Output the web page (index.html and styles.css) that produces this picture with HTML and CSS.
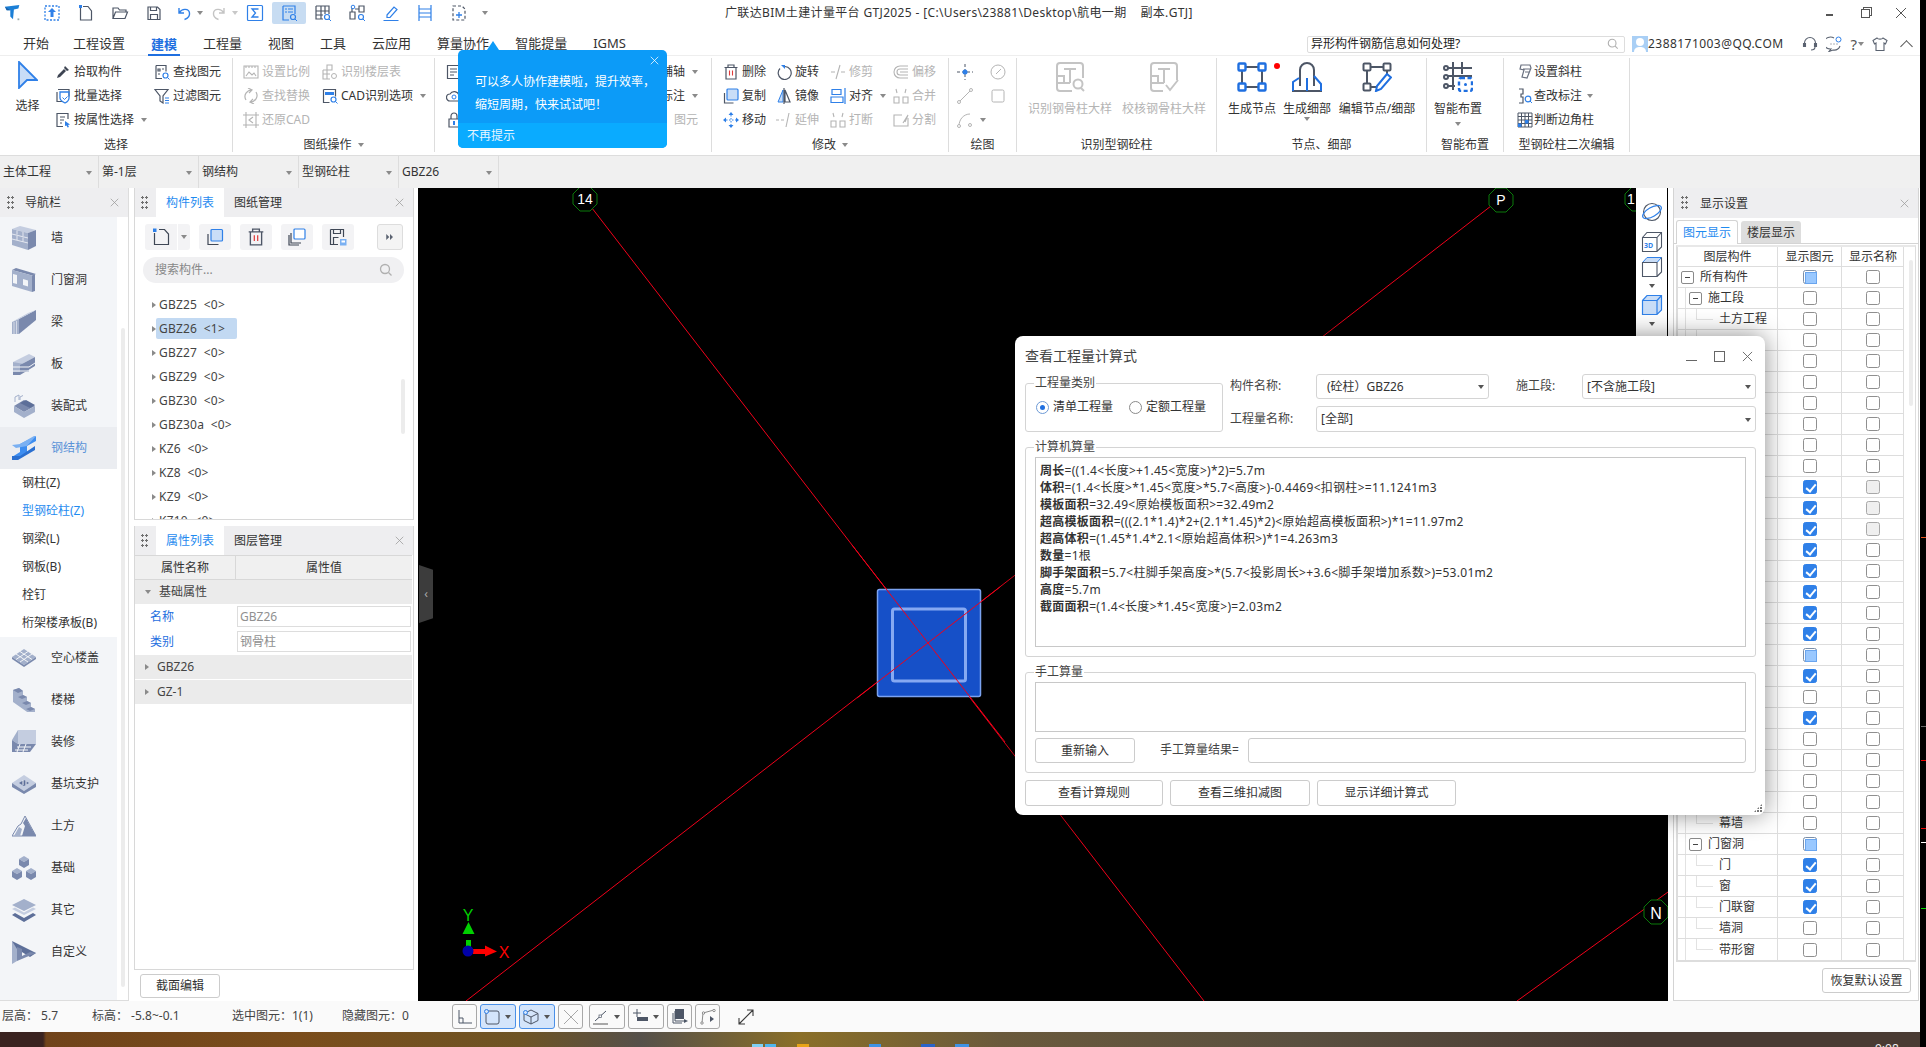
FILE: index.html
```html
<!DOCTYPE html>
<html lang="zh-CN">
<head>
<meta charset="utf-8">
<title>广联达BIM土建计量平台 GTJ2025</title>
<link rel="stylesheet" href="styles.css">
</head>
<body>
<svg class="sprite" xmlns="http://www.w3.org/2000/svg">
  <defs>
    <symbol id="logo" viewBox="0 0 20 20"><path fill="#1b7fd6" d="M1 3 L17 1 L16 5 L11 6 L10 17 L7 14 L7 7 L3 7z"/><path fill="#1b5fa6" d="M1 3 L7 7 L3 7z"/><path fill="#9aa" d="M15 16h2v2h-2z"/></symbol>
    <symbol id="q-up" viewBox="0 0 18 18"><rect x="2" y="2" width="14" height="14" fill="none" stroke="#2f80e8" stroke-dasharray="2 1.5" stroke-width="1.3"/><path fill="#2f80e8" d="M9 4l4 4h-2.500v5h-3V8H5z"/></symbol>
    <symbol id="q-new" viewBox="0 0 18 18"><path fill="none" stroke="#4d5666" stroke-width="1.2" d="M3.500 3.500V16h11V7L11 2.500H6"/><path fill="#2f80e8" d="M2 1h3v3H2z"/></symbol>
    <symbol id="q-open" viewBox="0 0 18 18"><path fill="none" stroke="#4d5666" stroke-width="1.2" d="M2 14.500V4h5l1.500 2H15v2M2 14.500l2.500-6.500H16.500L14 14.500z"/></symbol>
    <symbol id="q-save" viewBox="0 0 18 18"><path fill="none" stroke="#4d5666" stroke-width="1.2" d="M3 3h9.500L15 5.500V15.500H3zM5.500 3v3.500h6V3M5.500 15.500V10.500h7v5"/></symbol>
    <symbol id="q-undo" viewBox="0 0 18 18"><path fill="none" stroke="#2f80e8" stroke-width="1.4" d="M4 4v5h5M4.500 8.500C7 4 14 4.500 14.500 9c.4 3.500-2 5.500-5 6.500"/></symbol>
    <symbol id="q-redo" viewBox="0 0 18 18"><path fill="none" stroke="#c4c4c4" stroke-width="1.4" d="M14 4v5H9M13.500 8.500C11 4 4 4.500 3.500 9c-.4 3.500 2 5.500 5 6.500"/></symbol>
    <symbol id="q-sum" viewBox="0 0 18 18"><rect x="1.500" y="1.500" width="15" height="15" rx="1" fill="none" stroke="#2f80e8" stroke-width="1.2"/><path fill="none" stroke="#2f80e8" stroke-width="1.300" d="M12.500 5H6l3.500 4L6 13h6.500"/></symbol>
    <symbol id="q-list" viewBox="0 0 18 18"><path fill="none" stroke="#2f80e8" stroke-width="1.2" d="M3 2h12v8M3 2v14h6M5 5h2M8 5h5M5 8h2M8 8h5"/><circle cx="13" cy="13" r="2.500" fill="none" stroke="#2f80e8" stroke-width="1.2"/><path stroke="#2f80e8" d="M15 15l2 2"/></symbol>
    <symbol id="q-grid" viewBox="0 0 18 18"><path fill="none" stroke="#4d5666" stroke-width="1.2" d="M2 2h13v8M2 2v13h7M2 7h13M2 11h7M7 2v13M11 2v8"/><circle cx="13" cy="13" r="2.500" fill="none" stroke="#2f80e8" stroke-width="1.2"/><path stroke="#2f80e8" d="M15 15l2 2"/></symbol>
    <symbol id="q-comp" viewBox="0 0 18 18"><path fill="none" stroke="#4d5666" stroke-width="1.2" d="M2 8h5v7H2zM11 2h5v6h-5zM7 5h4M4 4v4"/><circle cx="13" cy="13" r="2.500" fill="none" stroke="#2f80e8" stroke-width="1.2"/><path stroke="#2f80e8" d="M15 15l2 2"/><circle cx="5" cy="3" r="1.800" fill="none" stroke="#2f80e8"/></symbol>
    <symbol id="q-edit" viewBox="0 0 18 18"><path fill="none" stroke="#2f80e8" stroke-width="1.2" d="M5 11l7-8 3 2.500-7 8H5zM1.500 16.500h15"/></symbol>
    <symbol id="q-frame" viewBox="0 0 18 18"><path fill="none" stroke="#2f80e8" stroke-width="1.2" d="M3 1v16M15 1v16M3 5h12M3 9h12M3 13h12"/></symbol>
    <symbol id="q-plus" viewBox="0 0 18 18"><path fill="none" stroke="#4d5666" stroke-width="1.2" stroke-dasharray="3 2" d="M3 2h9l3 3v11H3z"/><path stroke="#2f80e8" stroke-width="1.300" d="M6 11h6M9 8v6"/></symbol>
    <symbol id="r-arrow" viewBox="0 0 20 28"><path d="M1 1 L19 19 L9 19 L1 27z" fill="#c9ddf7" stroke="#2f80e8" stroke-width="1.800"/></symbol>
    <symbol id="r-pick" viewBox="0 0 16 16"><path fill="#3d4452" d="M10 2l4 4-2 1-3-3zM9 5l2 2-6 6-3 1 1-3z"/></symbol>
    <symbol id="r-batch" viewBox="0 0 16 16"><path fill="none" stroke="#4d5666" stroke-width="1.200" d="M3 1.500h11v7M2 4v9.500h6"/><path fill="none" stroke="#2f80e8" stroke-width="1.300" d="M5 4h9v6c0 2-2 4-4 5-2-1-5-3-5-5z"/><path fill="none" stroke="#2f80e8" d="M7.500 9.500l2 2 3-3"/></symbol>
    <symbol id="r-attr" viewBox="0 0 16 16"><path fill="none" stroke="#4d5666" stroke-width="1.200" d="M13 7V1.500H2v13h6M5 5h5M5 8h4M5 11h2"/><path fill="#2f80e8" d="M10 9l5 3.500-2 .5 1 2-1.500.5-1-2L10 14z"/></symbol>
    <symbol id="r-find" viewBox="0 0 16 16"><path fill="none" stroke="#4d5666" stroke-width="1.200" d="M2 1.500h10v6M2 1.500v13h6M4 5h2v2H4zM8 5h2M4 10h2"/><circle cx="11.500" cy="11.500" r="2.500" fill="none" stroke="#2f80e8" stroke-width="1.200"/><path stroke="#2f80e8" d="M13.500 13.500l2 2"/></symbol>
    <symbol id="r-filter" viewBox="0 0 16 16"><path fill="none" stroke="#4d5666" stroke-width="1.200" d="M1 1.500h13L9 8v7l-3-2V8z"/><path stroke="#2f80e8" d="M11 10h4M11 12.500h4M11 15h4"/></symbol>
    <symbol id="g-scale" viewBox="0 0 16 16"><path fill="none" stroke="currentColor" stroke-width="1.100" d="M1 2h14v12H1zM3 2v2M6 2v2M9 2v2M12 2v2M3 12l3-4 3 3 2-2 2 3"/></symbol>
    <symbol id="g-floor" viewBox="0 0 16 16"><path fill="none" stroke="currentColor" stroke-width="1.100" d="M1 6h9V1H5v5M1 6v9h7M1 10h7M5 6v9"/><circle cx="12" cy="12" r="2.500" fill="none" stroke="currentColor"/></symbol>
    <symbol id="g-repl" viewBox="0 0 16 16"><path fill="none" stroke="currentColor" stroke-width="1.200" d="M3 12C0 7 4 2 9 2M5 0l4 2-3 3M13 4c3 5-1 10-6 10M11 16l-4-2 3-3"/></symbol>
    <symbol id="g-cad" viewBox="0 0 16 16"><path fill="none" stroke="#4d5666" stroke-width="1.200" d="M1.500 1.500h12v7M1.500 1.500v13h6"/><path fill="#2f80e8" d="M3 4h9v3H3z"/><circle cx="11.500" cy="11.500" r="2.500" fill="none" stroke="#2f80e8" stroke-width="1.200"/><path stroke="#2f80e8" d="M13.500 13.500l2 2"/></symbol>
    <symbol id="g-restore" viewBox="0 0 16 16"><path fill="none" stroke="currentColor" stroke-width="1.100" d="M3 0v16M13 0v16M0 3h16M0 13h16M10 5L6 8l4 3"/></symbol>
    <symbol id="g-sheet" viewBox="0 0 16 16"><path fill="none" stroke="#4d5666" stroke-width="1.200" d="M1.500 1.500h12v13h-12zM4 5h7M4 8h7M4 11h4"/></symbol>
    <symbol id="g-cloud" viewBox="0 0 16 16"><path fill="none" stroke="#4d5666" stroke-width="1.200" d="M4 13a3.500 3.500 0 0 1 0-7 5 5 0 0 1 9 1 3 3 0 0 1 0 6z"/><circle cx="8" cy="9" r="2" fill="none" stroke="#2f80e8"/></symbol>
    <symbol id="g-lock" viewBox="0 0 16 16"><path fill="none" stroke="#4d5666" stroke-width="1.200" d="M3 7h10v8H3zM5 7V4a3 3 0 0 1 6 0v3"/><path fill="#2f80e8" d="M7 9h2v4H7z"/></symbol>
    <symbol id="m-del" viewBox="0 0 16 16"><path fill="none" stroke="#4d5666" stroke-width="1.200" d="M1.500 3.500h13M5 3.500V1h6v2.500M3 3.500h10V15H3z"/><path stroke="#e03b3b" stroke-width="1.100" d="M6.500 6.500v5M9.500 6.500v5"/></symbol>
    <symbol id="m-rot" viewBox="0 0 16 16"><path fill="none" stroke="#4d5666" stroke-width="1.200" d="M9 2.500A6.500 6.500 0 1 1 4 4.500"/><path fill="#2f80e8" d="M5 1h4v4z"/></symbol>
    <symbol id="m-trim" viewBox="0 0 16 16"><path fill="none" stroke="currentColor" stroke-width="1.100" d="M1 8h4M11 8h4M10 1L6 15"/></symbol>
    <symbol id="m-off" viewBox="0 0 16 16"><path fill="none" stroke="currentColor" stroke-width="1.100" d="M15 2H7a6 6 0 0 0 0 12h8M15 5H7a3 3 0 0 0 0 6h8M7 8h8"/></symbol>
    <symbol id="m-copy" viewBox="0 0 16 16"><path fill="none" stroke="#4d5666" stroke-width="1.200" d="M1.500 5v10h9"/><rect x="4" y="1" width="11" height="11" rx="1" fill="#c9ddf7" stroke="#2f80e8" stroke-width="1.200"/></symbol>
    <symbol id="m-mirror" viewBox="0 0 16 16"><path fill="#c9ddf7" stroke="#2f80e8" d="M7 2L2 14h5z"/><path fill="none" stroke="#4d5666" stroke-width="1.200" d="M9 2l5 12H9zM8 0v16"/></symbol>
    <symbol id="m-align" viewBox="0 0 16 16"><path fill="none" stroke="#2f80e8" stroke-width="1.200" d="M2 1.500h9v5H2zM1 9h12v5.500H1zM15 0v16" /></symbol>
    <symbol id="m-merge" viewBox="0 0 16 16"><path fill="none" stroke="currentColor" stroke-width="1.100" d="M1 9h5v6H1zM10 9h5v6h-5zM3 1l1 4M13 1l-1 4"/></symbol>
    <symbol id="m-move" viewBox="0 0 16 16"><path fill="#2f80e8" d="M8 0l2.500 3h-5zM8 16l-2.500-3h5zM0 8l3-2.500v5zM16 8l-3 2.500v-5z"/><path stroke="#2f80e8" stroke-dasharray="1.500 1.500" d="M8 3v10M3 8h10"/></symbol>
    <symbol id="m-ext" viewBox="0 0 16 16"><path fill="none" stroke="currentColor" stroke-width="1.100" stroke-dasharray="3 2" d="M0 8h9"/><path fill="none" stroke="currentColor" stroke-width="1.100" d="M13 1l-3 14"/></symbol>
    <symbol id="m-split" viewBox="0 0 16 16"><path fill="none" stroke="currentColor" stroke-width="1.100" d="M15 6v8H1V3h8M10 11l5-8-3 7"/></symbol>
    <symbol id="d-pt" viewBox="0 0 16 16"><path stroke="#4d5666" stroke-dasharray="3 2" d="M0 8h16M8 0v16"/><circle cx="8" cy="8" r="2.500" fill="#2f80e8"/></symbol>
    <symbol id="d-circ" viewBox="0 0 16 16"><circle cx="8" cy="8" r="7" fill="none" stroke="currentColor"/><path stroke="currentColor" d="M6 10l5-5"/></symbol>
    <symbol id="d-line" viewBox="0 0 16 16"><path stroke="currentColor" d="M2 14L14 2"/><circle cx="2" cy="14" r="1.500" fill="#fff" stroke="currentColor"/><circle cx="14" cy="2" r="1.500" fill="#fff" stroke="currentColor"/></symbol>
    <symbol id="d-rect" viewBox="0 0 16 16"><rect x="2" y="2" width="12" height="12" rx="1.500" fill="none" stroke="currentColor"/></symbol>
    <symbol id="d-arc" viewBox="0 0 16 16"><path fill="none" stroke="currentColor" d="M2 14C2 7 7 2 13 2"/><circle cx="2" cy="14" r="1.500" fill="#fff" stroke="currentColor"/><circle cx="13" cy="13" r="1.500" fill="#fff" stroke="currentColor"/></symbol>
    <symbol id="b-scan" viewBox="0 0 30 30"><path fill="none" stroke="#c4c4c4" stroke-width="2" d="M17 29H5a3 3 0 0 1-3-3V4a3 3 0 0 1 3-3h20a3 3 0 0 1 3 3v12M9 7h12M15 7v14M2 14h7v7H2M9 21h6"/><circle cx="23" cy="22" r="4.500" fill="none" stroke="#c4c4c4" stroke-width="2"/><path stroke="#c4c4c4" stroke-width="2" d="M26 26l3 3"/></symbol>
    <symbol id="b-check" viewBox="0 0 30 30"><path fill="none" stroke="#c4c4c4" stroke-width="2" d="M14 29H5a3 3 0 0 1-3-3V4a3 3 0 0 1 3-3h20a3 3 0 0 1 3 3v14M9 7h12M15 7v14M2 14h7v7H2M9 21h6M17 23l4 5 8-10"/></symbol>
    <symbol id="b-node" viewBox="0 0 30 30"><path stroke="#4d5666" stroke-width="2" d="M9 5h12M9 25h12M5 9v12M25 9v12"/><g fill="#fff" stroke="#1f6fe0" stroke-width="2.400"><rect x="1.500" y="1.500" width="7" height="7" rx="1"/><rect x="21.500" y="1.500" width="7" height="7" rx="1"/><rect x="1.500" y="21.500" width="7" height="7" rx="1"/><rect x="21.500" y="21.500" width="7" height="7" rx="1"/></g></symbol>
    <symbol id="b-detail" viewBox="0 0 30 30"><path fill="none" stroke="#4d5666" stroke-width="2" d="M8 24V8a7 7 0 0 1 14 0v16M0 29h30"/><path fill="none" stroke="#1f6fe0" stroke-width="2" d="M1 29V20l6-4M22 14l7 8v7M15 29V16"/></symbol>
    <symbol id="b-edit" viewBox="0 0 30 30"><path stroke="#4d5666" stroke-width="2" d="M9 5h12M9 25h5M5 9v12M25 9v3"/><g fill="#fff" stroke="#4d5666" stroke-width="2"><rect x="1.500" y="1.500" width="7" height="7" rx="1"/><rect x="21.500" y="1.500" width="7" height="7" rx="1"/><rect x="1.500" y="21.500" width="7" height="7" rx="1"/></g><path fill="#fff" stroke="#1f6fe0" stroke-width="2" d="M25 12l4 3.500L19 27l-5 2 1-5z"/></symbol>
    <symbol id="b-smart" viewBox="0 0 30 30"><path stroke="#4d5666" stroke-width="2" d="M4 6h25M4 14h25M4 24h8M10 0v28M19 0v12"/><g fill="#fff" stroke="#4d5666" stroke-width="2"><circle cx="3" cy="6" r="2"/><circle cx="3" cy="15" r="2"/><circle cx="3" cy="24" r="2"/></g><rect x="16" y="16" width="13" height="13" rx="2" fill="#fff" stroke="#1f6fe0" stroke-width="2.400" stroke-dasharray="4 2.500"/><circle cx="22.500" cy="22.500" r="1.500" fill="#1f6fe0"/></symbol>
    <symbol id="s-slant" viewBox="0 0 16 16"><path fill="none" stroke="#6a7180" stroke-width="1.200" d="M4 1h9l1 3-4 10-5-1 2-7-4-1zM6 5h7M8 8h4"/></symbol>
    <symbol id="s-mark" viewBox="0 0 16 16"><path fill="none" stroke="#4d5666" stroke-width="1.200" d="M2 1h4v5H4v3h2v6H2"/><circle cx="11" cy="11" r="2.800" fill="none" stroke="#2f80e8" stroke-width="1.200"/><path stroke="#2f80e8" d="M13 13l2 2"/></symbol>
    <symbol id="s-corner" viewBox="0 0 16 16"><path fill="none" stroke="#4d5666" d="M1 1h14v14H1zM1 4.500h14M1 8h14M1 11.500h14M4.500 1v14M8 1v14M11.500 1v14"/><path fill="#2f80e8" d="M1 11.500h3.500V15H1zM8 8h3.500v3.500H8z"/></symbol>
    <symbol id="h-mag" viewBox="0 0 14 14"><circle cx="6" cy="6" r="4.500" fill="none" stroke="#b0b0b0" stroke-width="1.300"/><path stroke="#b0b0b0" stroke-width="1.300" d="M9.500 9.500l3 3"/></symbol>
    <symbol id="h-user" viewBox="0 0 16 16"><path fill="#a9cff5" d="M0 0h16v16H0z"/><circle cx="8" cy="6" r="4" fill="#fff"/><path fill="#fff" d="M2 16c0-4 3-5 6-5s6 1 6 5z"/></symbol>
    <symbol id="h-head" viewBox="0 0 16 16"><path fill="none" stroke="#5a6270" stroke-width="1.100" d="M2.500 10V7a5.500 5.500 0 0 1 11 0v3M2.500 7.500H1.500v3h2v-3zM13.500 7.500h1v3h-2v-3zM13 11c0 2-2 3-4 3"/></symbol>
    <symbol id="h-chat" viewBox="0 0 16 16"><path fill="none" stroke="#5a6270" stroke-width="1.100" d="M8 2a6.500 6 0 1 0-3 11l-2 2.500 4-1.500a6.500 6 0 0 0 7-4"/><path stroke="#5a6270" stroke-dasharray="1 2" d="M4.500 8h7"/><circle cx="12.500" cy="3.500" r="2.500" fill="#fff" stroke="#2f80e8"/></symbol>
    <symbol id="h-shirt" viewBox="0 0 16 16"><path fill="none" stroke="#5a6270" stroke-width="1.100" d="M5 2L1 4.500 2.500 8 4 7v7.500h8V7l1.500 1L15 4.500 11 2C10 3.500 6 3.500 5 2z"/></symbol>
    <symbol id="x-close" viewBox="0 0 12 12"><path stroke="currentColor" d="M1 1l10 10M11 1L1 11"/></symbol>
    <symbol id="p-new" viewBox="0 0 18 18"><path fill="none" stroke="#3f4755" stroke-width="1.200" d="M2.500 5V16.500h14V6L12.500 1.500H7"/><path fill="#2f80e8" d="M1 .5h3.500V4H1z"/></symbol>
    <symbol id="p-dup" viewBox="0 0 18 18"><path fill="none" stroke="#3f4755" stroke-width="1.200" d="M2 6v10.500h10.500"/><rect x="5" y="1.500" width="11.500" height="11.500" rx="1" fill="#c9ddf7" stroke="#2f80e8" stroke-width="1.200"/></symbol>
    <symbol id="p-stack" viewBox="0 0 18 18"><path fill="none" stroke="#3f4755" stroke-width="1.200" d="M1 7v10h10M3 5v10h10"/><rect x="6" y="1" width="11" height="10" rx="1" fill="#fff" stroke="#2f80e8" stroke-width="1.200"/></symbol>
    <symbol id="p-saveas" viewBox="0 0 18 18"><path fill="none" stroke="#3f4755" stroke-width="1.200" d="M1.500 1.500h13V9M1.500 1.500v15H9M4.500 1.500v4h7v-4M4.500 16.500V9.500h5"/><rect x="11" y="11" width="6.500" height="6.500" fill="#7ab0f2"/><rect x="12.500" y="12.500" width="3.500" height="2" fill="#fff"/></symbol>
    <symbol id="p-ff" viewBox="0 0 10 8"><path fill="#5a6270" d="M0 0l4 4-4 4zM5 0l4 4-4 4z"/></symbol>
    <symbol id="n-wall" viewBox="0 0 24 24"><path fill="#c4cde0" d="M0 3l8-3 16 4-8 3z"/><path fill="#a3b0cb" d="M0 3l16 4v17L0 19z"/><path fill="#7a89ad" d="M16 7l8-3v16l-8 4z"/><path stroke="#fff" stroke-width=".7" d="M0 8l16 4M0 13l16 4M5 4.500v4M11 6v4M5 10v4M11 11.500v4"/></symbol>
    <symbol id="n-door" viewBox="0 0 24 24"><path fill="#7a89ad" d="M0 2l4-2 20 6-4 1.500z"/><path fill="#a3b0cb" d="M0 2l20 5.500V24L0 18z"/><path fill="#7a89ad" d="M20 7.500l3-1.500v17l-3 1z"/><path fill="#f3f5f8" d="M11 11l5 1.500v6l-5-1.500zM1 6l4 1v9l-4-1z"/></symbol>
    <symbol id="n-beam" viewBox="0 0 24 24"><path fill="#7a89ad" d="M7 9L24 0v10L7 24z"/><path fill="#a3b0cb" d="M0 12l7-3v15H0z"/><path fill="#c4cde0" d="M0 12L16 3l8-3L7 9z"/><path stroke="#f3f5f8" stroke-width=".6" d="M2 12v12M4.500 11v13"/></symbol>
    <symbol id="n-slab" viewBox="0 0 24 24"><path fill="#c4cde0" d="M1 10L17 2l6 3L8 13z"/><path fill="#a3b0cb" d="M1 10v10h16v-7z"/><path fill="#7a89ad" d="M8 13l15-8v9L8 23H1v-3h7zM1 15h11M1 19h11"/><path stroke="#f3f5f8" d="M1 15h16M1 19h16M17 15l6-4M17 19l6-4"/></symbol>
    <symbol id="n-prefab" viewBox="0 0 24 24"><path fill="#7a89ad" d="M2 12l10-6 11 6-11 6z"/><path fill="#a3b0cb" d="M2 12v6l10 6 11-6v-6l-11 6z"/><path fill="#5d6f99" d="M8 9l6-3 9 5-5 3z"/><path fill="none" stroke="#a3b0cb" d="M3 8V3l4-2v5M8 6V3l3-1.500"/></symbol>
    <symbol id="n-steel" viewBox="0 0 24 24"><path fill="#3d8df0" d="M8 8L24 0v5L15 10v6L4 24H0v-3l8-5z"/><path fill="#7ab0f2" d="M0 9L8 8l14-8h2l-9 10L4 12z"/><path fill="#2a6fd0" d="M0 20l8 0 15-10v4L6 24H0z"/></symbol>
    <symbol id="n-hollow" viewBox="0 0 24 24"><path fill="#a3b0cb" d="M0 11L12 3l12 8-12 8z"/><path fill="#7a89ad" d="M0 11v2l12 8 12-8v-2l-12 8z"/><path stroke="#f3f5f8" d="M4 8l12 8M8 5.500l12 8M16 5.500l-12 8M20 8l-12 8"/></symbol>
    <symbol id="n-stair" viewBox="0 0 24 24"><path fill="#a3b0cb" d="M1 2l6-2 4 3v4l4 2v4l4 2v4l4 2v3l-5 2L1 14z"/><path fill="#7a89ad" d="M7 0l4 3-5 2-5-3zM11 7l4 2-5 2-4-2zM15 13l4 2-5 2-4-2zM19 19l4 2-5 2-4-2z"/></symbol>
    <symbol id="n-deco" viewBox="0 0 24 24"><path fill="#c4cde0" d="M6 0h18v14H6z"/><path fill="#a3b0cb" d="M0 10l6-10v14z"/><path fill="#7a89ad" d="M0 10l6 4h18l-6 8H0z"/><path stroke="#f3f5f8" d="M5 17h14M3 20h13M8 14l-3 8M14 14l-3 8"/></symbol>
    <symbol id="n-pit" viewBox="0 0 24 24"><path fill="#c4cde0" d="M0 11L12 3l12 8-12 8z"/><path fill="#7a89ad" d="M0 11v4l12 7 12-7v-4l-12 8z"/><path fill="#5d6f99" d="M7 11l5-3 5 3-5 3z"/><path stroke="#f3f5f8" d="M11 8v5M14 9v4"/></symbol>
    <symbol id="n-earth" viewBox="0 0 24 24"><path fill="none" stroke="#7a89ad" d="M0 22L6 12l3-2 4-8 11 20z"/><path fill="#7a89ad" d="M10 22l3-10-2-3 3-5 3 6 7 12z"/><path fill="#a3b0cb" d="M2 22l5-9 3 2-2 7z"/></symbol>
    <symbol id="n-base" viewBox="0 0 24 24"><path fill="#a3b0cb" d="M7 3l5-3 5 3-5 3z"/><path fill="#7a89ad" d="M7 3v6l5 3V6zM17 3v6l-5 3V6z"/><path fill="#a3b0cb" d="M0 15l5-3 5 3-5 3zM14 15l5-3 5 3-5 3z"/><path fill="#7a89ad" d="M0 15v6l5 3v-6zM10 15v6l-5 3v-6zM14 15v6l5 3v-6zM24 15v6l-5 3v-6z"/></symbol>
    <symbol id="n-other" viewBox="0 0 24 24"><path fill="#a3b0cb" d="M0 7l12-6 12 6-12 6z"/><path fill="#c4cde0" d="M0 11l3-1.500 9 5 9-5 3 1.500-12 6z"/><path fill="#5d6f99" d="M0 17l3-2 9 5 9-5 3 2-12 7z"/></symbol>
    <symbol id="n-custom" viewBox="0 0 24 24"><path fill="#a3b0cb" d="M0 1v23l5-3V7z"/><path fill="#5d6f99" d="M0 1l24 12-6 4L5 9z"/><path fill="#7a89ad" d="M5 21l19-8-6-1-8 4V9L5 7z"/></symbol>
    <symbol id="v-sphere" viewBox="0 0 22 22"><circle cx="11" cy="11" r="8.500" fill="none" stroke="#4d5666" stroke-width="1.100"/><ellipse cx="11" cy="11" rx="10.500" ry="4.500" transform="rotate(-30 11 11)" fill="none" stroke="#2f80e8" stroke-width="1.200"/></symbol>
    <symbol id="v-3d" viewBox="0 0 22 22"><path fill="none" stroke="#4d5666" stroke-width="1.100" d="M1.500 6.500L6 1.500h14.500V16L16 20.500H1.500zM1.500 6.500H16v14M16 6.500l4.500-5"/><text x="3" y="16.500" font-size="7" font-weight="700" fill="#2f80e8" font-family="Noto Sans">3D</text></symbol>
    <symbol id="v-box" viewBox="0 0 22 22"><path fill="#c9ddf7" stroke="#2f80e8" d="M1.500 6.500L6 1.500h14.500l-4.500 5z"/><path fill="none" stroke="#4d5666" stroke-width="1.100" d="M1.500 6.500H16v14H1.500zM16 20.500l4.500-4.500V1.500"/></symbol>
    <symbol id="v-boxb" viewBox="0 0 22 22"><path fill="#c9ddf7" stroke="#2f80e8" stroke-width="1.200" d="M1.500 6.500L6 1.500h14.500V16L16 20.500H1.500zM1.500 6.500H16v14M16 6.500l4.500-5"/></symbol>
    <symbol id="f-ortho" viewBox="0 0 16 16"><path fill="none" stroke="#4d5666" d="M2 1v13h13M2 9h4v5"/></symbol>
    <symbol id="f-sel" viewBox="0 0 16 16"><rect x="2" y="2" width="13" height="13" rx="2" fill="none" stroke="#4d5666"/><circle cx="2.500" cy="2.500" r="2" fill="#d4e5fb" stroke="#2f80e8"/></symbol>
    <symbol id="f-cube" viewBox="0 0 16 16"><path fill="none" stroke="#4d5666" d="M8 1l7 3.500v7L8 15l-7-3.500v-7zM1 4.500L8 8l7-3.500M8 8v7"/><circle cx="2.500" cy="3.500" r="2" fill="#d4e5fb" stroke="#2f80e8"/></symbol>
    <symbol id="f-x" viewBox="0 0 16 16"><path stroke="#a8a8a8" d="M1 1l14 14M15 1L1 15"/></symbol>
    <symbol id="f-angle" viewBox="0 0 16 16"><path stroke="#4d5666" d="M2 12L13 2"/><path stroke="#a8a8a8" stroke-width="2" d="M0 15h15"/><rect x="6" y="6" width="2.500" height="2.500" fill="#fff" stroke="#4d5666" stroke-width=".7"/></symbol>
    <symbol id="f-plus" viewBox="0 0 16 16"><path stroke="#4d5666" d="M1 4h8M5 0v8"/><rect x="5" y="8" width="11" height="4" fill="#4d5666"/></symbol>
    <symbol id="f-layer" viewBox="0 0 16 16"><path fill="none" stroke="#4d5666" d="M1 4v10h9M3 2v10h9"/><rect x="3" y="0" width="9" height="10" fill="#4d5666"/><path fill="#4d5666" d="M12 10l4 2-4 2z"/></symbol>
    <symbol id="f-arc" viewBox="0 0 16 16"><path fill="none" stroke="#8a8a8a" d="M2 14L3 4l11-3"/><circle cx="2" cy="14" r="1.200" fill="#fff" stroke="#8a8a8a"/><circle cx="3.500" cy="4" r="1.200" fill="#fff" stroke="#8a8a8a"/><circle cx="14" cy="1.500" r="1.200" fill="#fff" stroke="#8a8a8a"/><path fill="#4d5666" d="M10 7l4 3-4 3z"/></symbol>
    <symbol id="f-full" viewBox="0 0 16 16"><path fill="none" stroke="#3a3a3a" stroke-width="1.100" d="M1 15l14-14M9 1h6v6M1 9v6h6"/></symbol>
  </defs>
</svg>

<div class="screen">
<div class="app">

  <header class="titlebar">
    <span class="qa qa-logo"><svg class="i18"><use href="#logo"/></svg></span>
    <span class="qa"><svg class="i18"><use href="#q-up"/></svg></span>
    <span class="qa"><svg class="i18"><use href="#q-new"/></svg></span>
    <span class="qa"><svg class="i18"><use href="#q-open"/></svg></span>
    <span class="qa"><svg class="i18"><use href="#q-save"/></svg></span>
    <span class="qa qa-undo"><svg class="i18"><use href="#q-undo"/></svg><i class="caret"></i></span>
    <span class="qa qa-redo"><svg class="i18"><use href="#q-redo"/></svg><i class="caret caret-light"></i></span>
    <span class="qa"><svg class="i18"><use href="#q-sum"/></svg></span>
    <span class="qa qa-on"><svg class="i18"><use href="#q-list"/></svg></span>
    <span class="qa"><svg class="i18"><use href="#q-grid"/></svg></span>
    <span class="qa"><svg class="i18"><use href="#q-comp"/></svg></span>
    <span class="qa"><svg class="i18"><use href="#q-edit"/></svg></span>
    <span class="qa"><svg class="i18"><use href="#q-frame"/></svg></span>
    <span class="qa"><svg class="i18"><use href="#q-plus"/></svg></span>
    <span class="qa qa-more"><i class="caret"></i></span>
    <span class="apptitle">广联达BIM土建计量平台 GTJ2025 - [C:\Users\23881\Desktop\航电一期&nbsp;&nbsp;&nbsp;&nbsp;副本.GTJ]</span>
    <span class="winctl">
      <span class="wbtn"><i class="w-min"></i></span>
      <span class="wbtn"><i class="w-rest"></i></span>
      <span class="wbtn"><svg class="i12"><use href="#x-close"/></svg></span>
    </span>
  </header>

  <nav class="menubar">
    <span class="m-first">开始</span><span>工程设置</span><span class="on">建模</span><span>工程量</span><span>视图</span><span>工具</span><span>云应用</span><span>算量协作</span><span>智能提量</span><span>IGMS</span>
    <span class="searchbox"><span class="searchtext">异形构件钢筋信息如何处理?</span><svg class="i12"><use href="#h-mag"/></svg></span>
    <svg class="avatar"><use href="#h-user"/></svg>
    <span class="email">2388171003@QQ.COM</span>
    <span class="helpicons">
      <svg class="i16"><use href="#h-head"/></svg>
      <svg class="i16"><use href="#h-chat"/></svg>
      <span class="qmark">?<i class="caret"></i></span>
      <svg class="i16"><use href="#h-shirt"/></svg>
      <span class="chev"></span>
    </span>
  </nav>

  <section class="ribbon">
    <div class="rg g1">
      <div class="rows rows-g1">
        <div class="big big-sel"><svg class="i-arrow"><use href="#r-arrow"/></svg><span>选择</span></div>
        <div class="t"><svg class="i16"><use href="#r-pick"/></svg>拾取构件</div>
        <div class="t"><svg class="i16"><use href="#r-find"/></svg>查找图元</div>
        <div class="t"><svg class="i16"><use href="#r-batch"/></svg>批量选择</div>
        <div class="t"><svg class="i16"><use href="#r-filter"/></svg>过滤图元</div>
        <div class="t"><svg class="i16"><use href="#r-attr"/></svg>按属性选择<i class="caret"></i></div>
      </div>
      <div class="rlabel">选择</div>
    </div>
    <div class="rg g2">
      <div class="rows rows-g2">
        <div class="t off"><svg class="i16"><use href="#g-scale"/></svg>设置比例</div>
        <div class="t off"><svg class="i16"><use href="#g-floor"/></svg>识别楼层表</div>
        <div class="t off"><svg class="i16"><use href="#g-repl"/></svg>查找替换</div>
        <div class="t"><svg class="i16"><use href="#g-cad"/></svg>CAD识别选项<i class="caret"></i></div>
        <div class="t off"><svg class="i16"><use href="#g-restore"/></svg>还原CAD</div>
      </div>
      <div class="rlabel">图纸操作<i class="caret"></i></div>
    </div>
    <div class="rg g3">
      <div class="rows rows-g3">
        <svg class="i16"><use href="#g-sheet"/></svg><div class="t t-end">辅轴<i class="caret"></i></div>
        <svg class="i16"><use href="#g-cloud"/></svg><div class="t t-end">标注<i class="caret"></i></div>
        <svg class="i16"><use href="#g-lock"/></svg><div class="t t-end off">图元</div>
      </div>
    </div>
    <div class="rg g4">
      <div class="rows rows-g4">
        <div class="t"><svg class="i16"><use href="#m-del"/></svg>删除</div>
        <div class="t"><svg class="i16"><use href="#m-rot"/></svg>旋转</div>
        <div class="t off"><svg class="i16"><use href="#m-trim"/></svg>修剪</div>
        <div class="t off"><svg class="i16"><use href="#m-off"/></svg>偏移</div>
        <div class="t"><svg class="i16"><use href="#m-copy"/></svg>复制</div>
        <div class="t"><svg class="i16"><use href="#m-mirror"/></svg>镜像</div>
        <div class="t"><svg class="i16"><use href="#m-align"/></svg>对齐<i class="caret"></i></div>
        <div class="t off"><svg class="i16"><use href="#m-merge"/></svg>合并</div>
        <div class="t"><svg class="i16"><use href="#m-move"/></svg>移动</div>
        <div class="t off"><svg class="i16"><use href="#m-ext"/></svg>延伸</div>
        <div class="t off"><svg class="i16"><use href="#m-merge"/></svg>打断</div>
        <div class="t off"><svg class="i16"><use href="#m-split"/></svg>分割</div>
      </div>
      <div class="rlabel">修改<i class="caret"></i></div>
    </div>
    <div class="rg g5">
      <div class="rows rows-g5">
        <div class="t"><svg class="i16"><use href="#d-pt"/></svg></div>
        <div class="t off"><svg class="i16"><use href="#d-circ"/></svg></div>
        <div class="t off"><svg class="i16"><use href="#d-line"/></svg></div>
        <div class="t off"><svg class="i16"><use href="#d-rect"/></svg></div>
        <div class="t off"><svg class="i16"><use href="#d-arc"/></svg><i class="caret"></i></div>
      </div>
      <div class="rlabel">绘图</div>
    </div>
    <div class="rg g6">
      <div class="bigs">
        <div class="big w90 off"><svg class="i30"><use href="#b-scan"/></svg><span>识别钢骨柱大样</span></div>
        <div class="big w90 off"><svg class="i30"><use href="#b-check"/></svg><span>校核钢骨柱大样</span></div>
      </div>
      <div class="rlabel">识别型钢砼柱</div>
    </div>
    <div class="rg g7">
      <div class="bigs">
        <div class="big w48 dotted"><svg class="i30"><use href="#b-node"/></svg><span>生成节点</span></div>
        <div class="big w48"><svg class="i30"><use href="#b-detail"/></svg><span>生成细部</span><i class="caret"></i></div>
        <div class="big w78"><svg class="i30"><use href="#b-edit"/></svg><span>编辑节点/细部</span></div>
      </div>
      <div class="rlabel">节点、细部</div>
    </div>
    <div class="rg g8">
      <div class="bigs">
        <div class="big w48"><svg class="i30"><use href="#b-smart"/></svg><span>智能布置</span><i class="caret caret-low"></i></div>
      </div>
      <div class="rlabel">智能布置</div>
    </div>
    <div class="rg g9">
      <div class="rows rows-g9">
        <div class="t"><svg class="i16"><use href="#s-slant"/></svg>设置斜柱</div>
        <div class="t"><svg class="i16"><use href="#s-mark"/></svg>查改标注<i class="caret"></i></div>
        <div class="t"><svg class="i16"><use href="#s-corner"/></svg>判断边角柱</div>
      </div>
      <div class="rlabel">型钢砼柱二次编辑</div>
    </div>
  </section>

  <div class="selbar">
    <div class="sel sel-first">主体工程<i class="caret"></i></div>
    <div class="sel">第-1层<i class="caret"></i></div>
    <div class="sel">钢结构<i class="caret"></i></div>
    <div class="sel">型钢砼柱<i class="caret"></i></div>
    <div class="sel">GBZ26<i class="caret"></i></div>
  </div>

  <main class="workspace">
    <aside class="navpanel">
      <div class="phead"><i class="grip"></i><span class="ptitle">导航栏</span><svg class="i12 pclose"><use href="#x-close"/></svg></div>
      <div class="navlist">
        <div class="navitem"><svg class="i24"><use href="#n-wall"/></svg><span>墙</span></div>
        <div class="navitem"><svg class="i24"><use href="#n-door"/></svg><span>门窗洞</span></div>
        <div class="navitem"><svg class="i24"><use href="#n-beam"/></svg><span>梁</span></div>
        <div class="navitem"><svg class="i24"><use href="#n-slab"/></svg><span>板</span></div>
        <div class="navitem"><svg class="i24"><use href="#n-prefab"/></svg><span>装配式</span></div>
        <div class="navitem active"><svg class="i24"><use href="#n-steel"/></svg><span>钢结构</span></div>
        <div class="subitem">钢柱(Z)</div>
        <div class="subitem on">型钢砼柱(Z)</div>
        <div class="subitem">钢梁(L)</div>
        <div class="subitem">钢板(B)</div>
        <div class="subitem">栓钉</div>
        <div class="subitem">桁架楼承板(B)</div>
        <div class="navitem"><svg class="i24"><use href="#n-hollow"/></svg><span>空心楼盖</span></div>
        <div class="navitem"><svg class="i24"><use href="#n-stair"/></svg><span>楼梯</span></div>
        <div class="navitem"><svg class="i24"><use href="#n-deco"/></svg><span>装修</span></div>
        <div class="navitem"><svg class="i24"><use href="#n-pit"/></svg><span>基坑支护</span></div>
        <div class="navitem"><svg class="i24"><use href="#n-earth"/></svg><span>土方</span></div>
        <div class="navitem"><svg class="i24"><use href="#n-base"/></svg><span>基础</span></div>
        <div class="navitem"><svg class="i24"><use href="#n-other"/></svg><span>其它</span></div>
        <div class="navitem"><svg class="i24"><use href="#n-custom"/></svg><span>自定义</span></div>
      </div>
      <i class="navthumb"></i>
    </aside>

    <div class="midcol">
      <section class="panel listpanel">
        <div class="phead tabhead"><i class="grip"></i><span class="tab on">构件列表</span><span class="tab">图纸管理</span><svg class="i12 pclose"><use href="#x-close"/></svg></div>
        <div class="ptools">
          <span class="pbtn pbtn-split"><svg class="i18"><use href="#p-new"/></svg></span><span class="pbtn pbtn-caret"><i class="caret"></i></span>
          <span class="pbtn"><svg class="i18"><use href="#p-dup"/></svg></span>
          <span class="pbtn"><svg class="i18"><use href="#m-del"/></svg></span>
          <span class="pbtn"><svg class="i18"><use href="#p-stack"/></svg></span>
          <span class="pbtn"><svg class="i18"><use href="#p-saveas"/></svg></span>
          <span class="pbtn pbtn-more"><svg class="i-ff"><use href="#p-ff"/></svg></span>
        </div>
        <div class="psearch"><span>搜索构件...</span><svg class="i14"><use href="#h-mag"/></svg></div>
        <ul class="tree">
          <li><i class="tri"></i><span>GBZ25&nbsp;&nbsp;&lt;0&gt;</span></li>
          <li class="sel-row"><i class="tri"></i><span>GBZ26&nbsp;&nbsp;&lt;1&gt;</span></li>
          <li><i class="tri"></i><span>GBZ27&nbsp;&nbsp;&lt;0&gt;</span></li>
          <li><i class="tri"></i><span>GBZ29&nbsp;&nbsp;&lt;0&gt;</span></li>
          <li><i class="tri"></i><span>GBZ30&nbsp;&nbsp;&lt;0&gt;</span></li>
          <li><i class="tri"></i><span>GBZ30a&nbsp;&nbsp;&lt;0&gt;</span></li>
          <li><i class="tri"></i><span>KZ6&nbsp;&nbsp;&lt;0&gt;</span></li>
          <li><i class="tri"></i><span>KZ8&nbsp;&nbsp;&lt;0&gt;</span></li>
          <li><i class="tri"></i><span>KZ9&nbsp;&nbsp;&lt;0&gt;</span></li>
          <li><i class="tri"></i><span>KZ10&nbsp;&nbsp;&lt;0&gt;</span></li>
        </ul>
        <i class="listthumb"></i>
      </section>

      <section class="panel proppanel">
        <div class="phead tabhead"><i class="grip"></i><span class="tab on">属性列表</span><span class="tab">图层管理</span><svg class="i12 pclose"><use href="#x-close"/></svg></div>
        <div class="prophead"><span>属性名称</span><span>属性值</span></div>
        <div class="propgroup"><i class="tri-down"></i>基础属性</div>
        <div class="proprow"><span class="pname">名称</span><span class="pval">GBZ26</span></div>
        <div class="proprow"><span class="pname">类别</span><span class="pval">钢骨柱</span></div>
        <div class="propgroup propgroup-a"><i class="tri"></i>GBZ26</div>
        <div class="propgroup propgroup-b"><i class="tri"></i>GZ-1</div>
      </section>
      <div class="midfoot"><button class="btn btn-sec">截面编辑</button></div>
    </div>

    <div class="canvas">
      <svg class="drawing" viewBox="418 188 1250 813" xmlns="http://www.w3.org/2000/svg">
        <g class="gridline">
          <line x1="585" y1="199" x2="1204" y2="1001"/>
          <line x1="1500" y1="199" x2="466" y2="1001"/>
          <line x1="1668" y1="892" x2="1517" y2="1001"/>
        </g>
        <rect x="877.500" y="589.500" width="103" height="107" rx="2" class="col-out"/>
        <rect x="892.500" y="609" width="73" height="72" rx="2" class="col-in"/>
        <g class="gridline">
          <line x1="852" y1="545" x2="1005" y2="742"/>
          <line x1="1000" y1="587" x2="857" y2="698"/>
        </g>
        <polygon class="bub" points="580,187 590,187 597,194 597,204 590,211 580,211 573,204 573,194"/>
        <text class="bubt" x="585" y="204">14</text>
        <polygon class="bub" points="1496,188 1506,188 1513,195 1513,205 1506,212 1496,212 1489,205 1489,195"/>
        <text class="bubt" x="1501" y="205">P</text>
        <polygon class="bub" points="1651,900 1661,900 1668,907 1668,917 1661,924 1651,924 1644,917 1644,907"/>
        <text class="bubt bubt-n" x="1656" y="919">N</text>
        <polygon class="bub" points="1632,187 1642,187 1649,194 1649,204 1642,211 1632,211 1625,204 1625,194"/>
        <text class="bubt" x="1631" y="204">1</text>
        <path fill="#00d000" d="M466 940h5v10h-5zM468.500 922l6 12h-12z"/>
        <path fill="#ff0000" d="M473 949h12v5h-12zM497 951.500l-12-6v11z"/>
        <circle cx="468" cy="951" r="5.500" fill="#0000a8"/>
        <text class="axis axis-y" x="468" y="921">Y</text>
        <text class="axis axis-x" x="504" y="958">X</text>
      </svg>
      <div class="handle">‹</div>
      <div class="viewtools">
        <svg class="i22"><use href="#v-sphere"/></svg>
        <svg class="i22"><use href="#v-3d"/></svg>
        <svg class="i22"><use href="#v-box"/></svg>
        <i class="caret caret-dark"></i>
        <svg class="i22"><use href="#v-boxb"/></svg>
        <i class="caret caret-dark"></i>
      </div>
    </div>

    <aside class="disppanel">
      <div class="phead"><i class="grip"></i><span class="ptitle">显示设置</span><svg class="i12 pclose"><use href="#x-close"/></svg></div>
      <div class="disptabs"><span class="dtab on">图元显示</span><span class="dtab">楼层显示</span></div>
      <div class="dtable">
        <div class="drow dhead"><span>图层构件</span><span>显示图元</span><span>显示名称</span></div>
        <div class="drow"><span class="n n0"><i class="minus"></i>所有构件</span><span><i class="cb half"></i></span><span><i class="cb"></i></span></div>
        <div class="drow"><span class="n n1"><i class="minus"></i>施工段</span><span><i class="cb"></i></span><span><i class="cb"></i></span></div>
        <div class="drow"><span class="n n2">土方工程</span><span><i class="cb"></i></span><span><i class="cb"></i></span></div>
        <div class="drow"><span class="n n2"></span><span><i class="cb"></i></span><span><i class="cb"></i></span></div>
        <div class="drow"><span class="n n2"></span><span><i class="cb"></i></span><span><i class="cb"></i></span></div>
        <div class="drow"><span class="n n2"></span><span><i class="cb"></i></span><span><i class="cb"></i></span></div>
        <div class="drow"><span class="n n2"></span><span><i class="cb"></i></span><span><i class="cb"></i></span></div>
        <div class="drow"><span class="n n2"></span><span><i class="cb"></i></span><span><i class="cb"></i></span></div>
        <div class="drow"><span class="n n2"></span><span><i class="cb"></i></span><span><i class="cb"></i></span></div>
        <div class="drow"><span class="n n2"></span><span><i class="cb"></i></span><span><i class="cb"></i></span></div>
        <div class="drow"><span class="n n2"></span><span><i class="cb on"></i></span><span><i class="cb dis"></i></span></div>
        <div class="drow"><span class="n n2"></span><span><i class="cb on"></i></span><span><i class="cb dis"></i></span></div>
        <div class="drow"><span class="n n2"></span><span><i class="cb on"></i></span><span><i class="cb dis"></i></span></div>
        <div class="drow"><span class="n n2"></span><span><i class="cb on"></i></span><span><i class="cb"></i></span></div>
        <div class="drow"><span class="n n2"></span><span><i class="cb on"></i></span><span><i class="cb"></i></span></div>
        <div class="drow"><span class="n n2"></span><span><i class="cb on"></i></span><span><i class="cb"></i></span></div>
        <div class="drow"><span class="n n2"></span><span><i class="cb on"></i></span><span><i class="cb"></i></span></div>
        <div class="drow"><span class="n n2"></span><span><i class="cb on"></i></span><span><i class="cb"></i></span></div>
        <div class="drow"><span class="n n2"></span><span><i class="cb half"></i></span><span><i class="cb"></i></span></div>
        <div class="drow"><span class="n n2"></span><span><i class="cb on"></i></span><span><i class="cb"></i></span></div>
        <div class="drow"><span class="n n2"></span><span><i class="cb"></i></span><span><i class="cb"></i></span></div>
        <div class="drow"><span class="n n2"></span><span><i class="cb on"></i></span><span><i class="cb"></i></span></div>
        <div class="drow"><span class="n n2"></span><span><i class="cb"></i></span><span><i class="cb"></i></span></div>
        <div class="drow"><span class="n n2"></span><span><i class="cb"></i></span><span><i class="cb"></i></span></div>
        <div class="drow"><span class="n n2"></span><span><i class="cb"></i></span><span><i class="cb"></i></span></div>
        <div class="drow"><span class="n n2"></span><span><i class="cb"></i></span><span><i class="cb"></i></span></div>
        <div class="drow"><span class="n n2">幕墙</span><span><i class="cb"></i></span><span><i class="cb"></i></span></div>
        <div class="drow"><span class="n n1"><i class="minus"></i>门窗洞</span><span><i class="cb half"></i></span><span><i class="cb"></i></span></div>
        <div class="drow"><span class="n n2">门</span><span><i class="cb on"></i></span><span><i class="cb"></i></span></div>
        <div class="drow"><span class="n n2">窗</span><span><i class="cb on"></i></span><span><i class="cb"></i></span></div>
        <div class="drow"><span class="n n2">门联窗</span><span><i class="cb on"></i></span><span><i class="cb"></i></span></div>
        <div class="drow"><span class="n n2">墙洞</span><span><i class="cb"></i></span><span><i class="cb"></i></span></div>
        <div class="drow"><span class="n n2">带形窗</span><span><i class="cb"></i></span><span><i class="cb"></i></span></div>
        <i class="dthumb"></i>
      </div>
      <div class="dispfoot"><button class="btn btn-reset">恢复默认设置</button></div>
    </aside>
  </main>

  <footer class="status">
    <span class="s1">层高：&nbsp;5.7</span>
    <span class="s2">标高：&nbsp;-5.8~-0.1</span>
    <span class="s3">选中图元：1(1)</span>
    <span class="s4">隐藏图元：0</span>
    <span class="ftools">
      <span class="fb fb-a"><svg class="i16"><use href="#f-ortho"/></svg></span>
      <span class="fb fb-b fb-on"><svg class="i16"><use href="#f-sel"/></svg><i class="caret caret-dark"></i></span>
      <span class="fb fb-b fb-on"><svg class="i16"><use href="#f-cube"/></svg><i class="caret caret-dark"></i></span>
      <span class="fb fb-a"><svg class="i16"><use href="#f-x"/></svg></span>
      <span class="fb fb-b fb-gap"><svg class="i16"><use href="#f-angle"/></svg><i class="caret caret-dark"></i></span>
      <span class="fb fb-b"><svg class="i16"><use href="#f-plus"/></svg><i class="caret caret-dark"></i></span>
      <span class="fb fb-a"><svg class="i16"><use href="#f-layer"/></svg></span>
      <span class="fb fb-a"><svg class="i16"><use href="#f-arc"/></svg></span>
      <svg class="i16 ffull"><use href="#f-full"/></svg>
    </span>
  </footer>

  <div class="taskbar">
    <i class="tk tk1"></i><i class="tk tk2"></i><i class="tk tk3"></i><i class="tk tk4"></i><i class="tk tk5"></i><i class="tk tk6"></i>
    <span class="clock">9:08</span>
  </div>

  <div class="tip">
    <i class="tip-arrow"></i>
    <svg class="i12 tip-x"><use href="#x-close"/></svg>
    <div class="tip-body">可以多人协作建模啦，提升效率，<br>缩短周期，快来试试吧！</div>
    <div class="tip-foot">不再提示</div>
  </div>

  <section class="dialog">
    <div class="dlg-title">
      <span>查看工程量计算式</span>
      <span class="dlg-ctl"><i class="d-min"></i><i class="d-max"></i><svg class="i14 d-x"><use href="#x-close"/></svg></span>
    </div>
    <div class="dlg-top">
      <div class="group g-type">
        <span class="legend">工程量类别</span>
        <label class="radio"><i class="rd rd-on"></i>清单工程量</label>
        <label class="radio"><i class="rd"></i>定额工程量</label>
      </div>
      <div class="dlg-form">
        <span>构件名称:</span>
        <span class="dsel dsel-pad">(砼柱）GBZ26<i class="caret caret-dark"></i></span>
        <span class="lbl-pad">施工段:</span>
        <span class="dsel">[不含施工段]<i class="caret caret-dark"></i></span>
        <span>工程量名称:</span>
        <span class="dsel dsel-wide">[全部]<i class="caret caret-dark"></i></span>
      </div>
    </div>
    <div class="group g-auto">
      <span class="legend">计算机算量</span>
      <div class="formula">
        <p><b>周长</b>=((1.4&lt;长度&gt;+1.45&lt;宽度&gt;)*2)=5.7m</p>
        <p><b>体积</b>=(1.4&lt;长度&gt;*1.45&lt;宽度&gt;*5.7&lt;高度&gt;)-0.4469&lt;扣钢柱&gt;=11.1241m3</p>
        <p><b>模板面积</b>=32.49&lt;原始模板面积&gt;=32.49m2</p>
        <p><b>超高模板面积</b>=(((2.1*1.4)*2+(2.1*1.45)*2)&lt;原始超高模板面积&gt;)*1=11.97m2</p>
        <p><b>超高体积</b>=(1.45*1.4*2.1&lt;原始超高体积&gt;)*1=4.263m3</p>
        <p><b>数量</b>=1根</p>
        <p><b>脚手架面积</b>=5.7&lt;柱脚手架高度&gt;*(5.7&lt;投影周长&gt;+3.6&lt;脚手架增加系数&gt;)=53.01m2</p>
        <p><b>高度</b>=5.7m</p>
        <p><b>截面面积</b>=(1.4&lt;长度&gt;*1.45&lt;宽度&gt;)=2.03m2</p>
      </div>
    </div>
    <div class="group g-manual">
      <span class="legend">手工算量</span>
      <div class="manual-area"></div>
      <div class="manual-row">
        <button class="btn btn-re">重新输入</button>
        <span class="manual-lbl">手工算量结果=</span>
        <span class="manual-in"></span>
      </div>
    </div>
    <div class="dlg-btns">
      <button class="btn b1">查看计算规则</button>
      <button class="btn b2">查看三维扣减图</button>
      <button class="btn b3">显示详细计算式</button>
    </div>
    <i class="grippy"></i>
  </section>
</div>
<div class="sliver"><i class="sl sl1"></i><i class="sl sl2"></i><i class="sl sl3"></i><i class="sl sl4"></i><i class="sl sl5"></i><i class="sl sl6"></i></div>
</div>
</body>
</html>
```
FILE: styles.css
```css
* { box-sizing: border-box; }
html, body { margin: 0; padding: 0; background: #000; }
body { font-family: "Noto Sans", "Noto Sans CJK SC", sans-serif; font-size: 12px; color: #333; line-height: 1.2; overflow: hidden; }
.sprite { position: absolute; width: 0; height: 0; }
i { display: block; font-style: normal; }
svg { display: block; flex: none; overflow: visible; }
ul, p { margin: 0; padding: 0; list-style: none; }
button { font: inherit; color: #333; background: #fff; border: 1px solid #ccc; border-radius: 3px; padding: 1px 0 0; }

.screen { display: flex; width: 1926px; height: 1047px; overflow: hidden; }
.app { position: relative; width: 1920px; height: 1047px; display: flex; flex-direction: column; flex: none; background: #fff; overflow: hidden; }
.sliver { position: relative; width: 6px; background: #000; }
.sl { position: absolute; left: 1px; width: 5px; height: 1px; }
.sl1 { top: 537px; background: #e8501a; }
.sl2 { top: 726px; background: #666; }
.sl3 { top: 760px; background: #e00; }
.sl4 { top: 828px; background: #e00; }
.sl5 { top: 842px; background: #fff; }
.sl6 { top: 908px; background: #0d0; }

.i12 { width: 12px; height: 12px; }
.i14 { width: 14px; height: 14px; }
.i16 { width: 16px; height: 16px; }
.i18 { width: 18px; height: 18px; }
.i22 { width: 22px; height: 22px; }
.i24 { width: 24px; height: 24px; }
.i30 { width: 30px; height: 30px; }

.caret { width: 0; height: 0; border-left: 3px solid transparent; border-right: 3px solid transparent; border-top: 4px solid #8a8a8a; flex: none; }
.caret-light { border-top-color: #c8c8c8; }
.caret-dark { border-top-color: #555; }

/* title bar */
.titlebar { height: 33px; display: flex; align-items: flex-start; flex: none; color: #333; }
.qa { width: 34px; height: 26px; display: flex; align-items: center; justify-content: center; flex: none; }
.qa-logo { width: 35px; padding-right: 9px; }
.qa-undo { width: 37px; gap: 4px; justify-content: flex-start; padding-left: 4px; }
.qa-redo { width: 30px; gap: 4px; justify-content: flex-start; padding-left: 2px; }
.qa-on { background: #c7dcf2; border-radius: 2px; height: 22px; margin-top: 2px; }
.qa-more { width: 18px; }
.apptitle { margin-left: 231px; line-height: 26px; white-space: nowrap; width: 600px; letter-spacing: .35px; }
.winctl { margin-left: auto; display: flex; padding-right: 1px; }
.wbtn { width: 36px; height: 26px; display: flex; align-items: center; justify-content: center; color: #555; }
.w-min { width: 7px; height: 2px; background: #555; margin-top: 4px; }
.w-rest { width: 9px; height: 9px; border: 1px solid #555; box-shadow: 2px -2px 0 -1px #fff, 2px -2px 0 0 #555; }

/* menu bar */
.menubar { height: 22px; flex: none; display: flex; align-items: center; gap: 26px; padding-left: 23px; font-size: 13px; color: #333; position: relative; }
.m-first { margin-right: -2px; }
.menubar > span.on { color: #1f6fe0; font-weight: 700; height: 22px; line-height: 22px; position: relative; }
.menubar > span.on::after { content: ""; position: absolute; left: -3px; right: -3px; bottom: -1px; height: 2px; background: #1f6fe0; }
.searchbox { margin-left: auto; margin-right: -19px; width: 318px; height: 17px; display: flex; align-items: center; justify-content: space-between; border: 1px solid #ddd; border-radius: 2px; padding: 0 5px 0 3px; font-size: 12px; }
.searchtext { white-space: nowrap; color: #222; }
.avatar { width: 16px; height: 16px; margin-right: -26px; }
.email { font-size: 12px; margin-right: -9px; color: #333; width: 134px; white-space: nowrap; letter-spacing: .45px; }
.helpicons { display: flex; align-items: center; gap: 8px; padding-right: 5px; width: 121px; justify-content: flex-end; }
.qmark { display: flex; align-items: center; gap: 1px; font-size: 15px; color: #555; }
.chev { width: 9px; height: 9px; border-left: 1px solid #555; border-top: 1px solid #555; transform: rotate(45deg); margin: 4px 4px 0 6px; }

/* ribbon */
.ribbon { height: 101px; flex: none; display: flex; border-top: 1px solid #eee; border-bottom: 1px solid #ddd; padding-top: 2px; }
.rg { height: 94px; border-right: 1px solid #ddd; flex: none; display: flex; flex-direction: column; }
.g1 { width: 233px; } .g2 { width: 202px; } .g3 { width: 277px; } .g4 { width: 237px; }
.g5 { width: 68px; } .g6 { width: 200px; } .g7 { width: 210px; } .g8 { width: 77px; } .g9 { width: 126px; }
.rows { display: grid; grid-auto-rows: 24px; height: 72px; margin-top: 2px; flex: none; align-items: center; }
.rows-g1 { grid-template-columns: 55px 99px 1fr; grid-template-rows: 24px 24px 24px; }
.big-sel { grid-row: 1 / 4; grid-column: 1; align-self: start; }
.rows-g2 { grid-template-columns: 79px 1fr; padding-left: 10px; }
.rows-g3 { grid-template-columns: 1fr auto; padding: 0 13px 0 11px; }
.rows-g4 { grid-template-columns: 53px 54px 63px 1fr; padding-left: 11px; }
.rows-g5 { grid-template-columns: 33px 1fr; padding-left: 8px; }
.rows-g9 { grid-template-columns: 1fr; padding-left: 13px; }
.rows-g9 .t { gap: 1px; }
.t { display: flex; align-items: center; gap: 3px; white-space: nowrap; color: #333; }
.t .caret { margin-left: 4px; }
.t-end { justify-content: flex-end; }
.t.off { color: #b4b4b4; }
.rlabel { height: 20px; line-height: 24px; text-align: center; white-space: nowrap; margin-top: 0; display: flex; justify-content: center; align-items: center; gap: 6px; padding-top: 6px; }
.big { display: flex; flex-direction: column; align-items: center; padding-top: 2px; white-space: nowrap; position: relative; }
.big > span { margin-top: 8px; line-height: 18px; }
.big.off { color: #b4b4b4; }
.big .caret { margin-top: -1px; }
.big .caret-low { margin-top: 4px; }
.i-arrow { width: 20px; height: 28px; margin-top: 1px; }
.big-sel > span { margin-top: 8px; }
.big-sel { padding-top: 0; }
.bigs { display: flex; gap: 7px; height: 72px; margin-top: 2px; flex: none; }
.g6 .bigs { padding-left: 8px; gap: 4px; }
.g7 .bigs { padding-left: 11px; }
.g8 .bigs { padding-left: 7px; }
.w90 { width: 90px; } .w48 { width: 48px; } .w78 { width: 78px; }
.dotted::after { content: ""; position: absolute; left: 46px; top: 3px; width: 6px; height: 6px; border-radius: 50%; background: #f00; }

/* select bar */
.selbar { height: 32px; flex: none; background: #f0f0f0; display: flex; align-items: stretch; }
.sel { width: 100px; position: relative; border-right: 1px solid #ddd; display: flex; align-items: center; justify-content: space-between; padding: 1px 6px 0 3px; color: #333; font-size: 12px; }
.sel-first { width: 99px; }

/* workspace */
.workspace { height: 813px; flex: none; display: flex; background: #fff; }
.navpanel { width: 129px; flex: none; border-right: 1px solid #ddd; border-bottom: 1px solid #ddd; position: relative; display: flex; flex-direction: column; }
.phead { height: 29px; flex: none; background: #eeeef0; display: flex; align-items: center; }
.ptitle { margin-left: 11px; padding-top: 2px; }
.grip { width: 7px; height: 14px; margin-left: 7px; flex: none; background: radial-gradient(circle at 1.500px 1.500px, #6f6f6f 1.300px, transparent 1.400px) 0 0 / 4px 5px; }
.pclose { margin-left: auto; margin-right: 9px; width: 9px; height: 9px; color: #999; }
.navlist { width: 117px; background: #f3f5f8; flex: 1; }
.navitem { height: 42px; display: flex; align-items: center; gap: 15px; padding-left: 12px; color: #333; }
.navitem > span { padding-top: 1px; }
.navitem.active { background: #ebedf1; color: #5a93d8; }
.subitem { height: 28px; line-height: 28px; padding-left: 22px; background: #fff; color: #333; width: 125px; }
.subitem.on { color: #1f8bf0; }
.navthumb { position: absolute; left: 121px; top: 140px; width: 4px; height: 659px; background: #ececec; border-radius: 2px; }

.midcol { width: 280px; flex: none; margin-left: 5px; display: flex; flex-direction: column; gap: 6px; }
.panel { border: 1px solid #d8d8d8; border-top: 0; position: relative; display: flex; flex-direction: column; overflow: hidden; }
.listpanel { height: 332px; flex: none; }
.proppanel { height: 444px; flex: none; }
.tabhead { height: 29px; }
.tab { height: 29px; line-height: 29px; padding: 0 10px; width: 68px; text-align: center; white-space: nowrap; }
.tabhead .grip { margin-right: 8px; margin-left: 6px; }
.tab.on { background: #fff; color: #1f8bf0; }
.ptools { display: flex; height: 26px; margin: 7px 0 0 10px; gap: 9px; flex: none; }
.pbtn { width: 32px; height: 26px; background: #f3f3f5; border-radius: 3px; display: flex; align-items: center; justify-content: center; flex: none; }
.pbtn-split { border-radius: 3px 0 0 3px; }
.pbtn-caret { width: 12px; margin-left: -8px; border-radius: 0 3px 3px 0; }
.pbtn-more { width: 26px; margin-left: 14px; background: #f4f4f4; border: 1px solid #ddd; }
.i-ff { width: 8px; height: 6px; }
.psearch { margin: 7px 0 0 8px; width: 261px; height: 26px; border-radius: 13px; background: #f0f0f2; display: flex; align-items: center; justify-content: space-between; padding: 0 11px 0 12px; color: #888; flex: none; }
.tree { margin-top: 10px; padding-left: 0; font-size: 12px; letter-spacing: .2px; }
.tree li { height: 24px; position: relative; display: flex; align-items: center; padding-left: 24px; color: #444; white-space: nowrap; }
.tree .tri { position: absolute; left: 17px; top: 9px; }
.tri { width: 0; height: 0; border-top: 3px solid transparent; border-bottom: 3px solid transparent; border-left: 4px solid #8a8a8a; flex: none; }
.sel-row::before { content: ""; position: absolute; left: 21px; top: 1px; width: 81px; height: 21px; background: #c2d9f2; border-radius: 2px; }
.sel-row span { position: relative; }
.listthumb { position: absolute; left: 266px; top: 191px; width: 4px; height: 55px; background: #ececec; border-radius: 2px; }

.prophead { height: 25px; flex: none; display: grid; grid-template-columns: 101px 1fr; background: #f0f0f0; border-top: 1px solid #d8d8d8; border-bottom: 1px solid #d8d8d8; margin-right: 1px; }
.prophead span { text-align: center; line-height: 23px; }
.prophead span:first-child { border-right: 1px solid #d8d8d8; }
.propgroup { height: 24px; flex: none; background: #ebebeb; display: flex; align-items: center; gap: 8px; padding-left: 10px; color: #444; margin-right: 1px; }
.propgroup-a { margin-top: 1px; }
.propgroup-b { margin-top: 1px; }
.tri-down { width: 0; height: 0; border-left: 3px solid transparent; border-right: 3px solid transparent; border-top: 4px solid #8a8a8a; }
.proprow { height: 25px; flex: none; display: grid; grid-template-columns: 101px 1fr; align-items: end; margin-right: 1px; }
.pname { color: #1f6fe0; padding-left: 15px; padding-bottom: 5px; }
.pval { height: 21px; margin: 0 1px 2px 1px; border: 1px solid #ddd; padding-left: 2px; line-height: 19px; color: #909090; }
.midfoot { padding: 0 0 0 6px; margin-top: -2px; }
.btn-sec { width: 80px; height: 24px; }

/* canvas */
.canvas { flex: none; width: 1250px; margin-left: 4px; background: #000; position: relative; overflow: hidden; }
.drawing { position: absolute; left: 0; top: 0; width: 1250px; height: 813px; }
.gridline line { stroke: #f0001a; stroke-width: 1; }
.col-out { fill: #1650c8; stroke: #7ba2f0; stroke-width: 1.500; }
.col-in { fill: #1650c8; stroke: #86a9f2; stroke-width: 3; }
.bub { fill: #000; stroke: #0a7a0a; stroke-width: 1; }
.bubt { fill: #fff; font-size: 14px; text-anchor: middle; font-family: "Liberation Sans", sans-serif; }
.bubt-n { font-size: 16px; }
.axis { font-size: 16px; text-anchor: middle; font-family: "Liberation Sans", sans-serif; }
.axis-y { fill: #00d000; }
.axis-x { fill: #ff0000; }
.handle { position: absolute; left: 1px; top: 377px; width: 14px; height: 58px; background: #3c3c3c; color: #aaa; line-height: 58px; text-align: center; font-size: 12px; clip-path: polygon(0 0, 100% 8%, 100% 92%, 0 100%); }
.viewtools { position: absolute; left: 1218px; top: 0; width: 31px; height: 150px; background: #fff; display: flex; flex-direction: column; align-items: center; padding-top: 13px; }
.viewtools .i22:nth-child(2) { margin-top: 8px; }
.viewtools .i22:nth-child(3) { margin-top: 3px; }
.viewtools .caret { margin: 6px 0 6px; }

/* display panel */
.disppanel { width: 246px; flex: none; margin-left: 5px; border: 1px solid #d4d4d4; border-top: 0; display: flex; flex-direction: column; }
.disppanel .phead { height: 30px; }
.disppanel .ptitle { margin-left: 12px; }
.disptabs { display: flex; gap: 3px; height: 26px; padding: 2px 0 0 2px; border-bottom: 1px solid #d4d4d4; flex: none; }
.dtab { width: 60px; text-align: center; line-height: 23px; background: #ddd; border-radius: 3px 3px 0 0; height: 22px; margin-top: 1px; }
.dtab.on { background: #fff; color: #1f8bf0; border: 1px solid #d4d4d4; border-bottom: 0; height: 24px; margin-top: 0; line-height: 23px; width: 62px; }
.dtable { position: relative; margin: 1px 2px 0 2px; border: 1px solid #ddd; border-top: 2px solid #e8e8e8; border-bottom: 2px solid #ddd; flex: none; width: 240px; }
.drow { display: grid; grid-template-columns: 100px 64px 62px; height: 21px; width: 227px; border-bottom: 1px solid #ddd; border-left: 1px solid #ddd; border-right: 1px solid #ddd; }
.drow:nth-child(34) { border-bottom: 0; }
.dhead { height: 20px; }
.drow > span { display: flex; align-items: center; justify-content: center; white-space: nowrap; border-right: 1px solid #ddd; }
.dhead > span { padding-top: 1px; }
.drow > span:last-child { border-right: 0; }
.n { position: relative; }
.drow > .n { justify-content: flex-start; padding-top: 1px; }
.n0 { padding-left: 3px; gap: 6px; }
.n1 { padding-left: 11px; gap: 6px; }
.n2 { padding-left: 41px; }
.n1::before, .n2::before { content: ""; position: absolute; left: 7px; top: 0; bottom: 0; width: 1px; background: #e2e2e2; }
.n2::after { content: ""; position: absolute; left: 18px; top: 0; width: 16px; height: 10px; border-left: 1px solid #e2e2e2; border-bottom: 1px solid #e2e2e2; }
.minus { width: 13px; height: 13px; border: 1px solid #8a8a8a; border-radius: 2px; position: relative; flex: none; background: #fff; z-index: 1; margin-top: -1px; }
.minus::after { content: ""; position: absolute; left: 3px; top: 5px; width: 5px; height: 1px; background: #444; }
.cb { width: 14px; height: 14px; border: 1px solid #8f8f8f; border-radius: 2.500px; position: relative; background: #fff; }
.cb.dis { background: #efefef; border-color: #a8a8a8; }
.cb.half { border-color: #7a8ea8; }
.cb.half::after { content: ""; position: absolute; left: 1px; top: 1px; width: 10px; height: 10px; background: #99c8ff; border: 1px solid #6aa5ee; }
.cb.on { background: #2f80e8; border-color: #2f80e8; }
.cb.on::after { content: ""; position: absolute; left: 4px; top: 1px; width: 4px; height: 8px; border-right: 2px solid #fff; border-bottom: 2px solid #fff; transform: rotate(40deg); }
.dthumb { position: absolute; left: 232px; top: 13px; width: 4px; height: 146px; background: #ececec; border-radius: 2px; }
.dispfoot { display: flex; justify-content: flex-end; padding: 6px 7px 0 0; }
.btn-reset { width: 89px; height: 25px; }

/* status */
.status { height: 31px; flex: none; background: #fafafa; display: flex; align-items: center; color: #444; position: relative; white-space: nowrap; }
.s1 { margin-left: 2px; width: 90px; }
.s2 { width: 140px; }
.s3 { width: 110px; }
.s4 { width: 110px; }
.ftools { display: flex; align-items: center; gap: 3px; }
.fb { height: 25px; border: 1px solid #a8a8a8; border-radius: 3px; display: flex; align-items: center; justify-content: flex-start; padding-left: 3px; gap: 5px; flex: none; }
.fb-a { width: 25px; justify-content: center; padding-left: 0; }
.fb-b { width: 36px; }
.fb-on { background: #d4e5fb; border-color: #4a90e8; }
.fb-gap { margin-left: 3px; }
.ffull { margin-left: 15px; }

/* taskbar */
.taskbar { height: 15px; flex: none; display: flex; overflow: hidden; position: relative; background: linear-gradient(90deg, #3a2320 0, #3a2320 43px, #70431a 46px, #7a4d1c 300px, #6e5424 520px, #55504a 640px, #8a6f28 800px, #6a5a3c 1000px, #5a5040 1300px, #4a3b33 1630px, #4a3b33 1920px); }
.tk { margin-top: 12px; height: 3px; }
.tk1 { margin-left: 752px; width: 11px; background: #7ed0f5; }
.tk2 { margin-left: 2px; width: 11px; background: #4eb6ee; }
.tk3 { margin-left: 21px; width: 12px; background: #e8a417; }
.tk4 { margin-left: 60px; width: 12px; background: #3f92e4; }
.tk5 { margin-left: 40px; width: 14px; background: #2a63c8; }
.tk6 { margin-left: 20px; width: 14px; background: #3f92e4; }
.clock { position: absolute; left: 1875px; top: 10px; color: #eee; font-size: 12px; line-height: 14px; }

/* tooltip */
.tip { position: absolute; left: 458px; top: 50px; width: 209px; height: 98px; background: #0c9bf8; border-radius: 5px; color: #fff; z-index: 3; overflow: visible; }
.tip-arrow { position: absolute; left: 29px; top: -9px; width: 0; height: 0; border-left: 6px solid transparent; border-right: 6px solid transparent; border-bottom: 9px solid #0c9bf8; }
.tip-x { position: absolute; right: 8px; top: 6px; width: 9px; height: 9px; color: #fff; }
.tip-body { padding: 20px 0 0 17px; line-height: 23px; height: 73px; white-space: nowrap; }
.tip-foot { height: 25px; line-height: 26px; background: #0aabff; padding-left: 9px; border-radius: 0 0 5px 5px; color: #e8f6ff; }

/* dialog */
.dialog { position: absolute; left: 1015px; top: 336px; width: 750px; height: 479px; background: #fff; border-radius: 8px; box-shadow: 0 0 24px rgba(0,0,0,.45); z-index: 4; padding: 0 9px 0 10px; display: flex; flex-direction: column; }
.dlg-title { height: 37px; flex: none; display: flex; justify-content: space-between; align-items: center; font-size: 14px; color: #444; margin-right: -9px; margin-top: 2px; }
.dlg-top { display: flex; height: 60px; flex: none; margin-top: -2px; }
.dlg-ctl { display: flex; align-items: center; gap: 17px; padding-right: 12px; }
.d-min { width: 11px; height: 1px; background: #666; margin-top: 8px; }
.d-max { width: 11px; height: 11px; border: 1px solid #666; }
.d-x { width: 11px; height: 11px; color: #666; }
.group { border: 1px solid #d4d4d4; border-radius: 3px; position: relative; flex: none; }
.legend { position: absolute; left: 8px; top: -9px; line-height: 16px; background: #fff; padding: 0 1px; color: #444; white-space: nowrap; }
.g-type { width: 198px; height: 49px; margin-top: 10px; display: flex; gap: 16px; padding: 15px 0 0 10px; }
.radio { display: flex; align-items: center; gap: 4px; height: 16px; white-space: nowrap; color: #333; }
.rd { width: 13px; height: 13px; border: 1px solid #8a8a8a; border-radius: 50%; flex: none; position: relative; background: #fff; }
.rd-on { border-color: #6d9ad6; }
.rd-on::after { content: ""; position: absolute; left: 3px; top: 3px; width: 5px; height: 5px; border-radius: 50%; background: #1f6fe0; }
.dlg-form { margin-left: 7px; width: 526px; display: grid; grid-template-columns: 86px 173px 93px 174px; grid-template-rows: 25px 26px; row-gap: 7px; margin-top: 1px; align-items: center; color: #444; white-space: nowrap; }
.lbl-pad { padding-left: 27px; }
.dsel { height: 100%; border: 1px solid #d4d4d4; border-radius: 3px; display: flex; align-items: center; justify-content: space-between; padding: 1px 4px 0 4px; color: #333; }
.dsel-pad { padding-left: 10px; }
.dsel-wide { grid-column: 2 / 5; }
.g-auto { height: 210px; margin-top: 14px; padding: 9px; }
.formula { height: 190px; border: 1px solid #c8c8c8; padding: 4px 0 0 4px; color: #333; white-space: nowrap; letter-spacing: .28px; }
.formula p { height: 17px; line-height: 17px; }
.formula b { font-weight: 700; }
.g-manual { height: 101px; margin-top: 15px; padding: 9px; display: flex; flex-direction: column; gap: 6px; }
.manual-area { height: 50px; border: 1px solid #c8c8c8; flex: none; }
.manual-row { display: flex; height: 25px; align-items: center; flex: none; }
.btn-re { width: 100px; height: 25px; }
.manual-lbl { margin-left: 25px; width: 88px; white-space: nowrap; color: #444; }
.manual-in { flex: 1; height: 25px; border: 1px solid #ccc; border-radius: 3px; }
.dlg-btns { display: flex; gap: 7px; margin-top: 7px; height: 26px; flex: none; }
.dlg-btns .btn { height: 26px; }
.b1 { width: 138px; } .b2 { width: 140px; } .b3 { width: 139px; }
.grippy { position: absolute; right: 3px; bottom: 3px; width: 8px; height: 8px; background: radial-gradient(circle at 1px 1px, #777 .9px, transparent 1px) 0 0 / 3px 3px; clip-path: polygon(100% 0, 100% 100%, 0 100%); }
```
